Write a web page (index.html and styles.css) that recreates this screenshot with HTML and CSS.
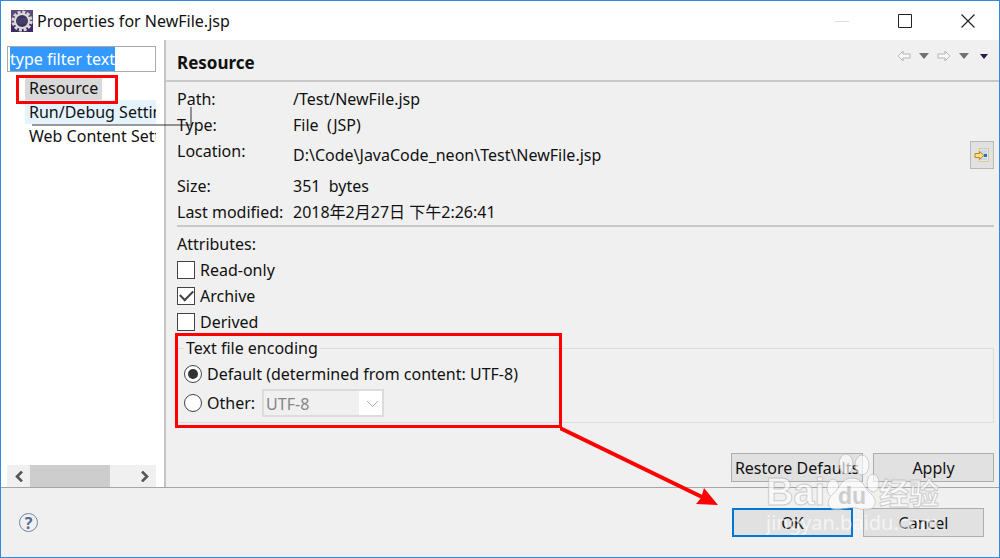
FILE: index.html
```html
<!DOCTYPE html>
<html lang="en">
<head>
  <meta charset="UTF-8">
  <title>Properties for NewFile.jsp</title>
  <meta name="viewport" content="width=device-width, initial-scale=1.0">
  <link rel="stylesheet" href="styles.css">
</head>
<body>

  <div class="window">
    <header class="titlebar">
      <svg class="app-icon" viewBox="0 0 22 22" aria-hidden="true">
        <rect width="22" height="22" fill="#5b4a80"/>
        <rect y="14" width="22" height="8" fill="#3d2a66"/>
        <circle cx="11" cy="11" r="9" fill="none" stroke="#d8d5d2" stroke-width="3" stroke-dasharray="3 1.71"/>
        <circle cx="11" cy="11" r="7" fill="#3a3356" stroke="#dedbd8" stroke-width="2"/>
        <path d="M6 9h10M5 11h12M6 13h10" stroke="#50477c"/>
      </svg>
      <h1>Properties for NewFile.jsp</h1>
      <button class="win-btn" type="button" aria-label="Minimize" disabled>
        <svg viewBox="0 0 14 14"><path d="M0 7.5h14" stroke="#ddd"/></svg>
      </button>
      <button class="win-btn" type="button" aria-label="Maximize">
        <svg viewBox="0 0 14 14"><path d="M.5.5h13v13H.5z" fill="none" stroke="#222"/></svg>
      </button>
      <button class="win-btn" type="button" aria-label="Close">
        <svg viewBox="0 0 14 14"><path d="M.5.5l13 13M13.5.5l-13 13" stroke="#222" stroke-width="1.2"/></svg>
      </button>
    </header>

    <main class="body">
      <nav class="sidebar">
        <input class="filter" type="text" value="type filter text" aria-label="Filter">
        <ul class="tree">
          <li><a class="selected" href="#resource">Resource</a></li>
          <li><a class="hovered" href="#run">Run/Debug Settings</a></li>
          <li><a href="#web">Web Content Settings</a></li>
        </ul>
        <div class="scrollbar">
          <button type="button" aria-label="Scroll left"><svg viewBox="0 0 8 11"><path d="M7 .5l-5 5 5 5" fill="none" stroke="#555" stroke-width="2.6"/></svg></button>
          <div class="track"><div class="thumb"></div></div>
          <button type="button" aria-label="Scroll right"><svg viewBox="0 0 8 11"><path d="M1 .5l5 5-5 5" fill="none" stroke="#555" stroke-width="2.6"/></svg></button>
        </div>
        <div class="mark mark-resource"></div>
        <div class="tip-edge"></div>
      </nav>

      <section class="page">
        <div class="page-head">
          <h2>Resource</h2>
          <div class="history">
            <button type="button" aria-label="Back"><svg viewBox="0 0 14 12"><path d="M1 6l5-5v3h7v4H6v3z" fill="#f8f8f8" stroke="#b4b4b4"/></svg></button>
            <button type="button" aria-label="Back history"><svg viewBox="0 0 14 12"><path d="M2 3h10L7 9z" fill="#707078"/></svg></button>
            <button type="button" aria-label="Forward"><svg viewBox="0 0 14 12"><path d="M13 6L8 1v3H1v4h7v3z" fill="#f8f8f8" stroke="#b4b4b4"/></svg></button>
            <button type="button" aria-label="Forward history"><svg viewBox="0 0 14 12"><path d="M2 3h10L7 9z" fill="#707078"/></svg></button>
            <button type="button" aria-label="Menu"><svg viewBox="0 0 14 12"><path d="M3 4h8L7 9z" fill="#2c1745"/></svg></button>
          </div>
        </div>

        <div class="content">
          <dl class="info">
            <dt>Path:</dt><dd>/Test/NewFile.jsp</dd>
            <dt>Type:</dt><dd>File&nbsp; (JSP)</dd>
            <dt>Location:</dt>
            <dd class="location">
              <span>D:\Code\JavaCode_neon\Test\NewFile.jsp</span>
              <button class="explore" type="button" aria-label="Show in explorer">
                <svg viewBox="0 0 16 16">
                  <path d="M5 1.500h9.500v13H5z" fill="#dbe7f5" stroke="#e0c88a"/>
                  <path d="M6 4h7M6 6h7M6 12h7" stroke="#b7cbe4"/>
                  <path d="M10 7h3v3h-3z" fill="#2f6cb0"/>
                  <path d="M1 6.500h4.500v-2L10 8.500l-4.500 4v-2H1z" fill="#ffe08a" stroke="#bf8416"/>
                </svg>
              </button>
            </dd>
            <dt>Size:</dt><dd>351&nbsp; bytes</dd>
            <dt>Last modified:</dt><dd>2018年2月27日 下午2:26:41</dd>
          </dl>

          <div class="attributes">
            <p>Attributes:</p>
            <label><input type="checkbox"> Read-only</label>
            <label><input type="checkbox" checked> Archive</label>
            <label><input type="checkbox"> Derived</label>
          </div>

          <fieldset class="encoding">
            <legend>Text file encoding</legend>
            <label><input type="radio" name="encoding" checked> Default (determined from content: UTF-8)</label>
            <div class="other">
              <label><input type="radio" name="encoding"> Other:</label>
              <select aria-label="Other encoding" disabled>
                <option>UTF-8</option>
              </select>
            </div>
            <div class="mark mark-encoding">
              <svg class="arrow" viewBox="0 0 160 82" aria-hidden="true">
                <path d="M0 2L142 71" stroke="#f00" stroke-width="4"/>
                <path d="M158 79L136 78l5-6 3-10z" fill="#f00"/>
              </svg>
            </div>
          </fieldset>

          <div class="page-actions">
            <button class="btn restore" type="button">Restore Defaults</button>
            <button class="btn" type="button">Apply</button>
          </div>
        </div>
      </section>
    </main>

    <footer class="footer">
      <button class="help" type="button" aria-label="Help">?</button>
      <button class="btn ok" type="button">OK</button>
      <button class="btn" type="button">Cancel</button>
    </footer>

    <svg class="watermark" viewBox="0 0 180 90" aria-hidden="true">
      <g class="wm-logo">
        <text class="wm-latin" x="0" y="55">Bai</text>
        <ellipse cx="67" cy="38" rx="6" ry="9"/>
        <ellipse cx="80" cy="14" rx="7" ry="10"/>
        <ellipse cx="96" cy="15" rx="7" ry="10"/>
        <ellipse cx="107" cy="33" rx="6" ry="9"/>
        <path d="M86 28C75 28 74 38 67 44C57 53 64 63 76 59Q86 56 95 59C108 63 114 52 105 44C98 38 97 28 86 28z"/>
        <text class="wm-cjk" x="113" y="54">经验</text>
      </g>
      <text class="wm-du" x="72" y="54">du</text>
      <text class="wm-url" x="0" y="80">jingyan.baidu.com</text>
    </svg>
  </div>

  <script>
    // filter text starts out selected
    const filter = document.querySelector(".filter");
    filter.focus();
    filter.select();
  </script>

</body>
</html>
```
FILE: styles.css
```css
* {
  box-sizing: border-box;
}

body {
  margin: 0;
  font-family: "Noto Sans", "Noto Sans CJK SC", sans-serif;
  font-size: 16px;
  line-height: 26px;
  color: #111;
}

h1, h2, p, ul, dl, dd {
  margin: 0;
  padding: 0;
}

button, input, select {
  font: inherit;
  color: inherit;
}

button {
  padding: 0;
  border: none;
  background: none;
}

.window {
  position: relative;
  display: flex;
  flex-direction: column;
  min-height: 100vh;
  border: 1px solid #2f8bdc;
  background: #f0f0f0;
}

/* title bar */
.titlebar {
  display: flex;
  align-items: center;
  height: 39px;
  padding-left: 10px;
  background: #fff;
}

.app-icon {
  width: 22px;
  height: 22px;
  margin-right: 4px;
}

.titlebar h1 {
  flex: 1;
  font-size: 16px;
  font-weight: normal;
}

.win-btn {
  display: grid;
  place-items: center;
  width: 63px;
  height: 38px;
}

.win-btn svg {
  width: 14px;
  height: 14px;
}

/* left tree */
.body {
  display: flex;
  flex: 1;
}

.sidebar {
  position: relative;
  display: flex;
  flex-direction: column;
  width: 165px;
  padding: 6px 8px 0 6px;
  border-right: 2px solid #c4c4c4;
  background: #fff;
}

.filter {
  width: 100%;
  height: 26px;
  padding: 0 2px;
  border: 1px solid #aaa;
  outline: none;
}

.filter::selection {
  background: #3399ff;
  color: #fff;
}

.tree {
  flex: 1;
  margin-top: 4px;
  padding-left: 18px;
  overflow: hidden;
  list-style: none;
}

.tree a {
  display: block;
  padding-left: 4px;
  line-height: 24px;
  color: inherit;
  text-decoration: none;
  white-space: nowrap;
}

.tree .selected {
  width: 77px;
  background: #d9d9d9;
}

.tree .hovered {
  background: #e5f3ff;
}

.scrollbar {
  display: flex;
  height: 22px;
  background: #f0f0f0;
}

.scrollbar button {
  display: grid;
  place-items: center;
  width: 23px;
}

.scrollbar svg {
  width: 8px;
  height: 11px;
}

.track {
  flex: 1;
}

.thumb {
  width: 78%;
  height: 100%;
  background: #cdcdcd;
}

/* right page */
.page {
  display: flex;
  flex: 1;
  flex-direction: column;
}

.page-head {
  display: flex;
  justify-content: space-between;
  height: 42px;
  padding: 10px 8px 0 11px;
  border-bottom: 2px solid #c8c8c8;
}

.page-head h2 {
  font-size: 17px;
  font-weight: bold;
}

.history {
  display: flex;
  align-items: flex-start;
  gap: 6px;
}

.history svg {
  display: block;
  width: 14px;
  height: 12px;
}

.content {
  display: flex;
  flex: 1;
  flex-direction: column;
  padding: 4px 5px 5px 11px;
}

.info {
  display: grid;
  grid-template-columns: 116px 1fr;
  border-bottom: 2px solid #c8c8c8;
}

.info dt {
  white-space: nowrap;
}

.location {
  display: flex;
  align-items: center;
  justify-content: space-between;
  padding: 3px 0 4px;
}

.explore {
  display: grid;
  place-items: center;
  width: 24px;
  height: 28px;
  border: 1px solid #b8b8b8;
  background: #e1e1e1;
}

.explore svg {
  width: 16px;
  height: 16px;
}

.attributes {
  margin-top: 4px;
}

label {
  display: flex;
  align-items: center;
  gap: 5px;
}

input[type="checkbox"],
input[type="radio"] {
  display: grid;
  place-items: center;
  width: 18px;
  height: 18px;
  margin: 0;
  border: 1px solid #444;
  background: #fff;
  appearance: none;
}

input[type="radio"] {
  border-radius: 50%;
}

input[type="checkbox"]:checked::before {
  content: "";
  width: 11px;
  height: 6px;
  margin-bottom: 4px;
  border-left: 2px solid #444;
  border-bottom: 2px solid #444;
  transform: rotate(-45deg);
}

input[type="radio"]:checked::before {
  content: "";
  width: 10px;
  height: 10px;
  border-radius: 50%;
  background: #333;
}

.encoding {
  position: relative;
  min-width: 0;
  margin: 0;
  padding: 0 6px 5px;
  border: 1px solid #dcdcdc;
}

.encoding legend {
  padding: 0 2px;
}

.other {
  display: flex;
  align-items: center;
  gap: 7px;
  margin-top: 2px;
}

select {
  width: 122px;
  height: 28px;
  padding: 0 2px;
  border: 2px solid #dcdcdc;
  appearance: none;
  background:
    linear-gradient(45deg, transparent 46%, #aaa 46% 56%, transparent 56%) 103px 10px / 6px 6px no-repeat,
    linear-gradient(-45deg, transparent 46%, #aaa 46% 56%, transparent 56%) 108px 10px / 6px 6px no-repeat,
    linear-gradient(#f0f0f0, #f0f0f0) 0 0 / 95px 100% no-repeat,
    #fff;
}

select:disabled {
  color: #858585;
  opacity: 1;
}

.page-actions {
  display: flex;
  justify-content: flex-end;
  gap: 10px;
  margin-top: auto;
}

.btn {
  width: 121px;
  height: 29px;
  border: 1px solid #adadad;
  background: #e1e1e1;
  line-height: 24px;
  white-space: nowrap;
}

.restore {
  width: 132px;
}

/* bottom bar */
.footer {
  display: flex;
  align-items: center;
  gap: 10px;
  height: 70px;
  padding: 0 15px 0 18px;
  border-top: 1px solid #a5a5a5;
}

.help {
  width: 19px;
  height: 19px;
  margin-right: auto;
  border: 1px solid #7287a5;
  border-radius: 50%;
  font-weight: bold;
  line-height: 16px;
  color: #526b91;
}

.ok {
  border: 2px solid #0078d7;
}

/* red callouts */
.mark {
  position: absolute;
  border: 3px solid #f00;
  pointer-events: none;
}

.mark-resource {
  top: 35px;
  left: 15px;
  width: 102px;
  height: 29px;
}

.mark-encoding {
  top: -28px;
  left: -3px;
  width: 387px;
  height: 95px;
}

.arrow {
  position: absolute;
  top: 90px;
  left: 382px;
  width: 160px;
  height: 82px;
}

.tip-edge {
  position: absolute;
  top: 67px;
  left: 31px;
  width: 160px;
  height: 19px;
  border-right: 2px solid rgba(0, 0, 0, 0.4);
  border-bottom: 2px solid rgba(0, 0, 0, 0.4);
  pointer-events: none;
}

.watermark {
  position: absolute;
  right: 53px;
  bottom: 17px;
  width: 180px;
  height: 90px;
  fill: #fff;
  opacity: 0.65;
  pointer-events: none;
}

.wm-logo {
  stroke: #bbb;
  stroke-width: 1px;
}

.wm-latin {
  font: bold 38px "Liberation Sans", sans-serif;
}

.wm-cjk {
  font: bold 30px "Noto Sans CJK SC", sans-serif;
}

.wm-du {
  font: bold 23px "Liberation Sans", sans-serif;
  fill: #bbb;
}

.wm-url {
  font-size: 20px;
}
```
